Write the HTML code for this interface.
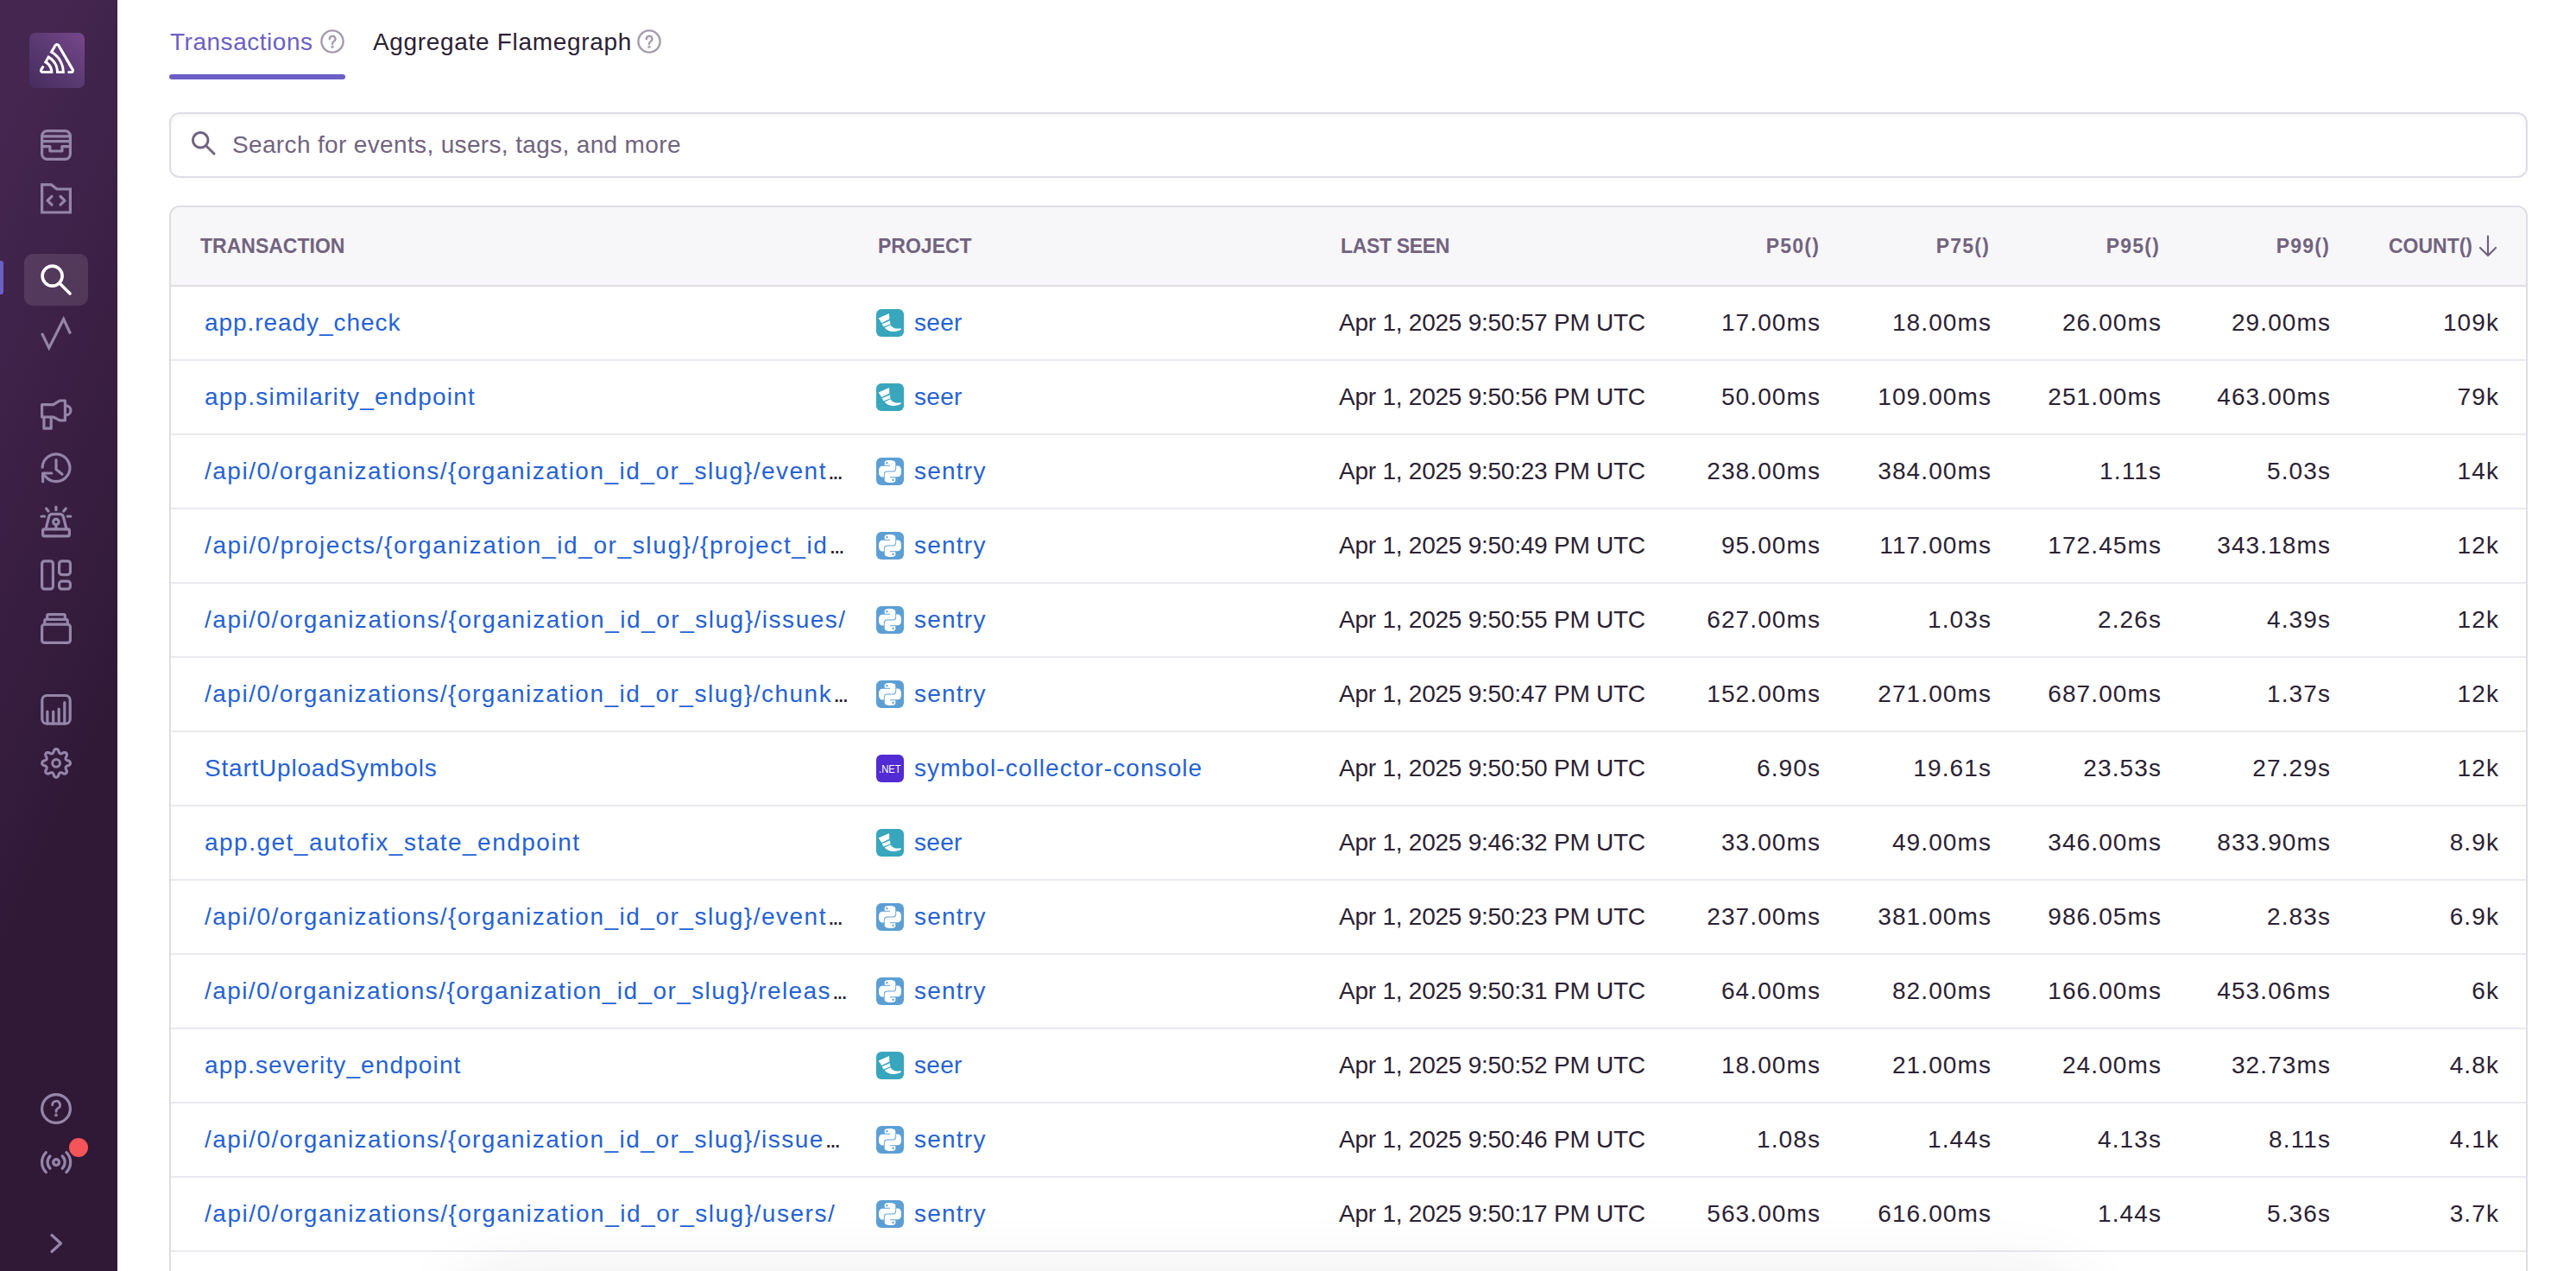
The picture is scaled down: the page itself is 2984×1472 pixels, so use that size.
<!DOCTYPE html>
<html><head><meta charset="utf-8"><style>
*{box-sizing:border-box;margin:0;padding:0}
html,body{width:2984px;height:1472px;overflow:hidden;background:#fff;font-family:"Liberation Sans",sans-serif;color:#2b2233}
#sb{position:absolute;left:0;top:0;width:136px;height:1472px;background:linear-gradient(294.17deg,#2f1937 35.57%,#452650 92.42%)}
#logo{position:absolute;left:34px;top:38px;width:64px;height:64px;border-radius:7px;background:linear-gradient(45deg,#452d5e 0%,#5b3a72 50%,#77478c 100%)}
#actbar{position:absolute;left:0;top:302px;width:4px;height:39px;border-radius:0 3px 3px 0;background:#6c5fc7}
#actbg{position:absolute;left:28px;top:294px;width:74px;height:60px;border-radius:10px;background:rgba(255,255,255,0.11)}
#sbicons{position:absolute;left:0;top:0}
#reddot{position:absolute;left:80px;top:1318px;width:22px;height:22px;border-radius:50%;background:#f55459;box-shadow:0 0 0 1.5px #2f1937}
.tab{position:absolute;top:0;height:60px;line-height:60px;font-size:28px;white-space:nowrap}
.hq{position:absolute;top:34px}
#ul{position:absolute;left:196px;top:86px;width:204px;height:6px;border-radius:3px;background:#6c5fc7}
#search{position:absolute;left:196px;top:130px;width:2732px;height:76px;border:2px solid #e0dce5;border-radius:12px;box-shadow:inset 0 2px 4px rgba(43,34,51,0.05)}
#search .ph{position:absolute;left:71px;top:0;line-height:72px;font-size:28px;color:#71637e;letter-spacing:0.35px}
#table{position:absolute;left:196px;top:238px;width:2732px;height:1400px;border:2px solid #e0dce5;border-radius:12px;overflow:hidden}
#thead{position:absolute;left:198px;top:240px;width:2728px;height:92px;background:#f7f6f9;border-bottom:2px solid #e0dce5;border-radius:10px 10px 0 0}
.th{position:absolute;top:240px;height:90px;line-height:90px;font-size:23px;font-weight:700;color:#71637e;white-space:nowrap;letter-spacing:0px}
.row{position:absolute;left:198px;width:2728px;height:86px;border-bottom:2px solid #ebe8ef}
.row>div{position:absolute;top:0;height:84px;line-height:84px;font-size:28px;white-space:nowrap}
.lk{color:#2562d4}
.ell{letter-spacing:-2.6px;margin-left:1px}
.c1{left:39px;width:760px;overflow:hidden;color:#2b2233}
.c2{left:817px}
.c2 .pi{position:absolute;left:0;top:26px}
.c2 .lk{position:absolute;left:44px}
.c3{left:1353px;letter-spacing:-0.24px}
.cn{text-align:right;letter-spacing:1.1px}
#shade{position:absolute;left:540px;top:1500px;width:1860px;height:100px;border-radius:60px;box-shadow:0 0 80px 22px rgba(43,34,51,0.09);pointer-events:none}
</style></head><body>

<div id="sb">
  <div id="logo"><svg width="40" height="35.2" viewBox="0 0 50 44" style="position:absolute;left:12px;top:12px"><path fill="#fff" d="M29,2.26a4.67,4.67,0,0,0-8,0L14.42,13.53A32.21,32.21,0,0,1,32.17,40.19H27.55A27.68,27.68,0,0,0,12.09,17.47L6,28a15.92,15.92,0,0,1,9.23,12.17H4.62A.76.76,0,0,1,4,39.06l2.94-5a10.740,10.740,0,0,0-3.36-1.9l-2.91,5a4.54,4.54,0,0,0,1.69,6.24A4.66,4.66,0,0,0,4.62,44H19.15a19.4,19.4,0,0,0-8-17.31l2.31-4A23.870,23.870,0,0,1,23.76,44H36.07a35.88,35.88,0,0,0-16.41-31.8l4.67-8a.77.77,0,0,1,1.05-.27c.53.29,20.290,34.770,20.660,35.170a.76.76,0,0,1-.68,1.13H40.6q.09,1.91,0,3.81h4.78A4.590,4.590,0,0,0,50,39.43a4.49,4.49,0,0,0-.62-2.28Z"/></svg></div>
  <div id="actbar"></div>
  <div id="actbg"></div>
  <svg id="sbicons" width="136" height="1472" viewBox="0 0 136 1472" fill="none" stroke="#9585a8" stroke-width="3.2" stroke-linecap="round" stroke-linejoin="round">
    <!-- inbox -->
    <rect x="48.6" y="151.6" width="32.8" height="32.8" rx="6"/>
    <path d="M49 157.8 H81 M49 163.7 H81 M49 169.6 H57.9 V175 H71.9 V169.6 H81" stroke-linecap="butt"/>
    <!-- folder code -->
    <path d="M48.6 213.9 H59.5 L65.8 219 H81.4 V246 H48.6 Z" stroke-linecap="butt" stroke-linejoin="miter"/>
    <path d="M60 227.5 L55 232.3 L60 237.2 M70 227.5 L75 232.3 L70 237.2"/>
    <!-- search active -->
    <g stroke="#fff" stroke-width="3.6"><circle cx="60.6" cy="319.6" r="11.5"/><path d="M69.5 328.5 L81 340"/></g>
    <!-- issues -->
    <path d="M48.5 386 L56.8 403 L73.7 369.5 L81.5 386.5" stroke-linecap="butt" stroke-linejoin="miter"/>
    <!-- megaphone -->
    <path d="M48.6 468.6 H61.8 L69.2 464 H75.4 V486.8 H69.2 L61.8 483 H48.6 Z"/>
    <path d="M76.4 469.8 A5.5 5.5 0 0 1 76.4 480.8"/>
    <path d="M50.9 483 V496.2 H59.2 V483"/>
    <!-- history clock -->
    <path d="M49.1 541.2 A15.9 15.9 0 1 1 52.8 552 L49.8 548.6"/>
    <path d="M59.8 548 H49.6 V557.8"/>
    <path d="M65 532.5 V543.5 L72 549.2"/>
    <!-- siren -->
    <rect x="49.6" y="612.8" width="30.8" height="8" rx="1.5"/>
    <path d="M53 612.8 L56.5 599 Q57.2 595.4 61 595.4 H69 Q72.8 595.4 73.5 599 L77 612.8"/>
    <circle cx="64.9" cy="604.4" r="3.2"/><path d="M64.9 607.6 V612.8"/>
    <path d="M64.9 587.2 V590.6 M53.6 589 L56 592 M76.2 589 L73.8 592 M48 598 H51.6 M78.2 598 H81.8"/>
    <!-- dashboards -->
    <rect x="48.6" y="649.8" width="12.8" height="32.4" rx="3"/>
    <rect x="68.6" y="649.8" width="12.8" height="15.8" rx="3"/>
    <rect x="68.6" y="673.2" width="12.8" height="9" rx="3"/>
    <!-- stack -->
    <rect x="48.6" y="723.2" width="32.8" height="21.2" rx="3"/>
    <path d="M51.8 723 V719 Q51.8 717.3 53.5 717.3 H76.5 Q78.2 717.3 78.2 719 V723"/>
    <path d="M54.7 717 V713.3 Q54.7 711.6 56.4 711.6 H73.6 Q75.3 711.6 75.3 713.3 V717"/>
    <!-- chart -->
    <rect x="48.8" y="805.5" width="32.4" height="32.7" rx="5.5"/>
    <path d="M54.9 824 V838 M61.7 824 V838 M68.2 821 V838 M74.8 813.7 V838" stroke-linecap="round"/>
    <!-- gear -->
    <path d="M81.50 883.80 L81.46 884.23 L81.34 884.65 L81.15 885.06 L80.87 885.46 L80.52 885.83 L80.08 886.17 L79.51 886.47 L78.55 886.66 L77.97 886.89 L77.51 887.12 L77.12 887.36 L76.80 887.60 L76.54 887.85 L76.33 888.11 L76.19 888.39 L76.09 888.69 L76.05 889.02 L76.06 889.39 L76.12 889.78 L76.22 890.22 L76.38 890.71 L76.63 891.29 L77.18 892.10 L77.37 892.71 L77.44 893.27 L77.43 893.78 L77.34 894.25 L77.19 894.68 L76.97 895.07 L76.70 895.40 L76.37 895.67 L75.98 895.89 L75.55 896.04 L75.08 896.13 L74.57 896.14 L74.01 896.07 L73.40 895.88 L72.59 895.33 L72.01 895.08 L71.52 894.92 L71.08 894.82 L70.69 894.76 L70.32 894.75 L69.99 894.79 L69.69 894.89 L69.41 895.03 L69.15 895.24 L68.90 895.50 L68.66 895.82 L68.42 896.21 L68.19 896.67 L67.96 897.25 L67.77 898.21 L67.47 898.78 L67.13 899.22 L66.76 899.57 L66.36 899.85 L65.95 900.04 L65.53 900.16 L65.10 900.20 L64.67 900.16 L64.25 900.04 L63.84 899.85 L63.44 899.57 L63.07 899.22 L62.73 898.78 L62.43 898.21 L62.24 897.25 L62.01 896.67 L61.78 896.21 L61.54 895.82 L61.30 895.50 L61.05 895.24 L60.79 895.03 L60.51 894.89 L60.21 894.79 L59.88 894.75 L59.51 894.76 L59.12 894.82 L58.68 894.92 L58.19 895.08 L57.61 895.33 L56.80 895.88 L56.19 896.07 L55.63 896.14 L55.12 896.13 L54.65 896.04 L54.22 895.89 L53.83 895.67 L53.50 895.40 L53.23 895.07 L53.01 894.68 L52.86 894.25 L52.77 893.78 L52.76 893.27 L52.83 892.71 L53.02 892.10 L53.57 891.29 L53.82 890.71 L53.98 890.22 L54.08 889.78 L54.14 889.39 L54.15 889.02 L54.11 888.69 L54.01 888.39 L53.87 888.11 L53.66 887.85 L53.40 887.60 L53.08 887.36 L52.69 887.12 L52.23 886.89 L51.65 886.66 L50.69 886.47 L50.12 886.17 L49.68 885.83 L49.33 885.46 L49.05 885.06 L48.86 884.65 L48.74 884.23 L48.70 883.80 L48.74 883.37 L48.86 882.95 L49.05 882.54 L49.33 882.14 L49.68 881.77 L50.12 881.43 L50.69 881.13 L51.65 880.94 L52.23 880.71 L52.69 880.48 L53.08 880.24 L53.40 880.00 L53.66 879.75 L53.87 879.49 L54.01 879.21 L54.11 878.91 L54.15 878.58 L54.14 878.21 L54.08 877.82 L53.98 877.38 L53.82 876.89 L53.57 876.31 L53.02 875.50 L52.83 874.89 L52.76 874.33 L52.77 873.82 L52.86 873.35 L53.01 872.92 L53.23 872.53 L53.50 872.20 L53.83 871.93 L54.22 871.71 L54.65 871.56 L55.12 871.47 L55.63 871.46 L56.19 871.53 L56.80 871.72 L57.61 872.27 L58.19 872.52 L58.68 872.68 L59.12 872.78 L59.51 872.84 L59.88 872.85 L60.21 872.81 L60.51 872.71 L60.79 872.57 L61.05 872.36 L61.30 872.10 L61.54 871.78 L61.78 871.39 L62.01 870.93 L62.24 870.35 L62.43 869.39 L62.73 868.82 L63.07 868.38 L63.44 868.03 L63.84 867.75 L64.25 867.56 L64.67 867.44 L65.10 867.40 L65.53 867.44 L65.95 867.56 L66.36 867.75 L66.76 868.03 L67.13 868.38 L67.47 868.82 L67.77 869.39 L67.96 870.35 L68.19 870.93 L68.42 871.39 L68.66 871.78 L68.90 872.10 L69.15 872.36 L69.41 872.57 L69.69 872.71 L69.99 872.81 L70.32 872.85 L70.69 872.84 L71.08 872.78 L71.52 872.68 L72.01 872.52 L72.59 872.27 L73.40 871.72 L74.01 871.53 L74.57 871.46 L75.08 871.47 L75.55 871.56 L75.98 871.71 L76.37 871.93 L76.70 872.20 L76.97 872.53 L77.19 872.92 L77.34 873.35 L77.43 873.82 L77.44 874.33 L77.37 874.89 L77.18 875.50 L76.63 876.31 L76.38 876.89 L76.22 877.38 L76.12 877.82 L76.06 878.21 L76.05 878.58 L76.09 878.91 L76.19 879.21 L76.33 879.49 L76.54 879.75 L76.80 880.00 L77.12 880.24 L77.51 880.48 L77.97 880.71 L78.55 880.94 L79.51 881.13 L80.08 881.43 L80.52 881.77 L80.87 882.14 L81.15 882.54 L81.34 882.95 L81.46 883.37 L81.50 883.80Z" stroke-width="3.1"/>
    <circle cx="65.1" cy="883.8" r="4.4" stroke-width="3"/>
    <!-- help -->
    <circle cx="65" cy="1284" r="16.4"/>
    <path d="M60.7 1279.8 A4.4 4.4 0 1 1 67 1283.6 Q65 1284.8 65 1287.4" stroke-width="2.8"/>
    <circle cx="65" cy="1291.4" r="0.6" fill="#9585a8" stroke-width="2.6"/>
    <!-- broadcast -->
    <circle cx="65.1" cy="1346.1" r="3.4"/>
    <path d="M58 1339 A10 10 0 0 0 58 1353.2 M72.2 1339 A10 10 0 0 1 72.2 1353.2"/>
    <path d="M53.3 1334.6 A16.3 16.3 0 0 0 53.3 1357.6 M76.9 1334.6 A16.3 16.3 0 0 1 76.9 1357.6"/>
    <!-- chevron -->
    <path d="M60 1430.5 L70.5 1440 L60 1449.5"/>
  </svg>
  <div id="reddot"></div>
</div>
<div class="tab" style="left:197px;top:19px;color:#6c5fc7;letter-spacing:0.52px">Transactions</div>
<svg class="hq" style="left:371px" width="28" height="28" viewBox="0 0 28 28" fill="none" stroke="#a59cae" stroke-width="2.4" stroke-linecap="round"><circle cx="14" cy="14" r="12.6"/><path d="M10.8 11.2 A3.3 3.3 0 1 1 15.6 14 Q14 15 14 16.8"/><circle cx="14" cy="20.2" r="0.6" fill="#a59cae"/></svg>
<div class="tab" style="left:432px;top:19px;letter-spacing:0.68px">Aggregate Flamegraph</div>
<svg class="hq" style="left:738px" width="28" height="28" viewBox="0 0 28 28" fill="none" stroke="#a59cae" stroke-width="2.4" stroke-linecap="round"><circle cx="14" cy="14" r="12.6"/><path d="M10.8 11.2 A3.3 3.3 0 1 1 15.6 14 Q14 15 14 16.8"/><circle cx="14" cy="20.2" r="0.6" fill="#a59cae"/></svg>
<div id="ul"></div>
<div id="search"><svg style="position:absolute;left:23px;top:19px" width="32" height="32" viewBox="0 0 32 32" fill="none" stroke="#71637e" stroke-width="3" stroke-linecap="round"><circle cx="11.2" cy="11.3" r="8.8"/><path d="M17.6 17.7 L27 27"/></svg><span class="ph">Search for events, users, tags, and more</span></div>
<div id="table"></div>
<div id="thead"></div>
<div class="th" style="left:232px">TRANSACTION</div>
<div class="th" style="left:1017px">PROJECT</div>
<div class="th" style="left:1553px;letter-spacing:-0.35px">LAST SEEN</div>
<div class="th" style="right:876px;letter-spacing:1.2px">P50()</div>
<div class="th" style="right:679px;letter-spacing:1.2px">P75()</div>
<div class="th" style="right:482px;letter-spacing:1.2px">P95()</div>
<div class="th" style="right:285px;letter-spacing:1.2px">P99()</div>
<div class="th" style="right:91px">COUNT()<svg style="margin-left:7px;vertical-align:-5px" width="22" height="26" viewBox="0 0 22 26" fill="none" stroke="#71637e" stroke-width="2.2" stroke-linecap="round" stroke-linejoin="round"><path d="M11 1.5 V24 M2 15 L11 24 L20 15"/></svg></div>
<div class="row" style="top:332px"><div class="c1" style="letter-spacing:0.94px"><span class="lk">app.ready_check</span></div><div class="c2"><svg class="pi" width="32" height="32" viewBox="0 0 32 32"><rect width="32" height="32" rx="6" fill="#38a6bd"/><path d="M2.6 10.4 L15 5.1 L15.4 11.6 L6.3 15.9 Z M6.7 17.3 L16 13.2 L16.4 17.3 L8.5 20.5 Z M9.7 21.4 L16.75 18.3 C17.8 20.5 19.5 21.6 21.5 22.2 C24 22.9 26.5 22.6 28.9 22.2 L28.6 23.8 C26 25.2 22.6 26.3 19.5 26 C15.6 25.7 12 24.3 9.7 21.4 Z" fill="#fff"/></svg><span class="lk" style="letter-spacing:0.3px">seer</span></div><div class="c3">Apr 1, 2025 9:50:57 PM UTC</div><div class="cn" style="right:817px">17.00ms</div><div class="cn" style="right:619px">18.00ms</div><div class="cn" style="right:422px">26.00ms</div><div class="cn" style="right:226px">29.00ms</div><div class="cn" style="right:31px">109k</div></div><div class="row" style="top:418px"><div class="c1" style="letter-spacing:1.2px"><span class="lk">app.similarity_endpoint</span></div><div class="c2"><svg class="pi" width="32" height="32" viewBox="0 0 32 32"><rect width="32" height="32" rx="6" fill="#38a6bd"/><path d="M2.6 10.4 L15 5.1 L15.4 11.6 L6.3 15.9 Z M6.7 17.3 L16 13.2 L16.4 17.3 L8.5 20.5 Z M9.7 21.4 L16.75 18.3 C17.8 20.5 19.5 21.6 21.5 22.2 C24 22.9 26.5 22.6 28.9 22.2 L28.6 23.8 C26 25.2 22.6 26.3 19.5 26 C15.6 25.7 12 24.3 9.7 21.4 Z" fill="#fff"/></svg><span class="lk" style="letter-spacing:0.3px">seer</span></div><div class="c3">Apr 1, 2025 9:50:56 PM UTC</div><div class="cn" style="right:817px">50.00ms</div><div class="cn" style="right:619px">109.00ms</div><div class="cn" style="right:422px">251.00ms</div><div class="cn" style="right:226px">463.00ms</div><div class="cn" style="right:31px">79k</div></div><div class="row" style="top:504px"><div class="c1" style="letter-spacing:1.5px"><span class="lk">/api/0/organizations/{organization_id_or_slug}/event</span><span class="ell">...</span></div><div class="c2"><svg class="pi" width="32" height="32" viewBox="0 0 32 32"><rect width="32" height="32" rx="6" fill="#5c9fd5"/><g transform="translate(3,3) scale(1.0833)" fill="#fff"><path d="M14.25.18l.9.2.73.26.59.3.45.32.34.34.25.34.16.33.1.3.04.26.02.2-.01.13V8.5l-.05.63-.13.55-.21.46-.26.38-.3.31-.33.25-.35.19-.35.14-.33.1-.3.07-.26.04-.21.02H8.77l-.69.05-.59.14-.5.22-.41.27-.33.32-.27.35-.2.36-.15.37-.1.35-.07.32-.04.27-.02.21v3.06H3.17l-.21-.03-.28-.07-.32-.12-.35-.18-.36-.26-.36-.36-.35-.46-.32-.59-.28-.73-.21-.88-.14-1.05-.05-1.23.06-1.22.16-1.04.24-.87.32-.71.36-.57.4-.44.42-.33.42-.24.4-.16.36-.1.32-.05.24-.01h.16l.06.01h8.16v-.83H6.18l-.01-2.75-.02-.37.05-.34.11-.31.17-.28.25-.26.31-.23.38-.2.44-.18.51-.15.58-.12.64-.1.71-.06.77-.04.84-.02 1.27.05zm-6.3 1.98l-.23.33-.08.41.08.41.23.34.33.22.41.09.41-.09.33-.22.23-.34.08-.41-.08-.41-.23-.33-.33-.22-.41-.09-.41.09zm13.09 3.95l.28.06.32.12.35.18.36.27.36.35.35.47.32.59.28.73.21.88.14 1.04.05 1.23-.06 1.23-.16 1.04-.24.86-.32.71-.36.57-.4.45-.42.33-.42.24-.4.16-.36.09-.32.05-.24.02-.16-.01h-8.22v.82h5.84l.01 2.76.02.36-.05.34-.11.31-.17.29-.25.25-.31.24-.38.2-.44.17-.51.15-.58.13-.64.09-.71.07-.77.04-.84.01-1.27-.04-1.07-.14-.9-.2-.73-.25-.59-.3-.45-.33-.34-.34-.25-.34-.16-.33-.1-.3-.04-.25-.02-.2.01-.13v-5.34l.05-.64.13-.54.21-.46.26-.38.3-.32.33-.24.35-.2.35-.14.33-.1.3-.06.26-.04.21-.02.13-.01h5.84l.69-.05.59-.14.5-.21.41-.28.33-.32.27-.35.2-.36.15-.36.1-.35.07-.32.04-.28.02-.21V6.07h2.09l.14.01zm-6.47 14.25l-.23.33-.08.41.08.41.23.33.33.23.41.08.41-.08.33-.23.23-.33.08-.41-.08-.41-.23-.33-.33-.23-.41-.08-.41.08z"/></g></svg><span class="lk" style="letter-spacing:1.23px">sentry</span></div><div class="c3">Apr 1, 2025 9:50:23 PM UTC</div><div class="cn" style="right:817px">238.00ms</div><div class="cn" style="right:619px">384.00ms</div><div class="cn" style="right:422px">1.11s</div><div class="cn" style="right:226px">5.03s</div><div class="cn" style="right:31px">14k</div></div><div class="row" style="top:590px"><div class="c1" style="letter-spacing:1.62px"><span class="lk">/api/0/projects/{organization_id_or_slug}/{project_id</span><span class="ell">...</span></div><div class="c2"><svg class="pi" width="32" height="32" viewBox="0 0 32 32"><rect width="32" height="32" rx="6" fill="#5c9fd5"/><g transform="translate(3,3) scale(1.0833)" fill="#fff"><path d="M14.25.18l.9.2.73.26.59.3.45.32.34.34.25.34.16.33.1.3.04.26.02.2-.01.13V8.5l-.05.63-.13.55-.21.46-.26.38-.3.31-.33.25-.35.19-.35.14-.33.1-.3.07-.26.04-.21.02H8.77l-.69.05-.59.14-.5.22-.41.27-.33.32-.27.35-.2.36-.15.37-.1.35-.07.32-.04.27-.02.21v3.06H3.17l-.21-.03-.28-.07-.32-.12-.35-.18-.36-.26-.36-.36-.35-.46-.32-.59-.28-.73-.21-.88-.14-1.05-.05-1.23.06-1.22.16-1.04.24-.87.32-.71.36-.57.4-.44.42-.33.42-.24.4-.16.36-.1.32-.05.24-.01h.16l.06.01h8.16v-.83H6.18l-.01-2.75-.02-.37.05-.34.11-.31.17-.28.25-.26.31-.23.38-.2.44-.18.51-.15.58-.12.64-.1.71-.06.77-.04.84-.02 1.27.05zm-6.3 1.98l-.23.33-.08.41.08.41.23.34.33.22.41.09.41-.09.33-.22.23-.34.08-.41-.08-.41-.23-.33-.33-.22-.41-.09-.41.09zm13.09 3.95l.28.06.32.12.35.18.36.27.36.35.35.47.32.59.28.73.21.88.14 1.04.05 1.23-.06 1.23-.16 1.04-.24.86-.32.71-.36.57-.4.45-.42.33-.42.24-.4.16-.36.09-.32.05-.24.02-.16-.01h-8.22v.82h5.84l.01 2.76.02.36-.05.34-.11.31-.17.29-.25.25-.31.24-.38.2-.44.17-.51.15-.58.13-.64.09-.71.07-.77.04-.84.01-1.27-.04-1.07-.14-.9-.2-.73-.25-.59-.3-.45-.33-.34-.34-.25-.34-.16-.33-.1-.3-.04-.25-.02-.2.01-.13v-5.34l.05-.64.13-.54.21-.46.26-.38.3-.32.33-.24.35-.2.35-.14.33-.1.3-.06.26-.04.21-.02.13-.01h5.84l.69-.05.59-.14.5-.21.41-.28.33-.32.27-.35.2-.36.15-.36.1-.35.07-.32.04-.28.02-.21V6.07h2.09l.14.01zm-6.47 14.25l-.23.33-.08.41.08.41.23.33.33.23.41.08.41-.08.33-.23.23-.33.08-.41-.08-.41-.23-.33-.33-.23-.41-.08-.41.08z"/></g></svg><span class="lk" style="letter-spacing:1.23px">sentry</span></div><div class="c3">Apr 1, 2025 9:50:49 PM UTC</div><div class="cn" style="right:817px">95.00ms</div><div class="cn" style="right:619px">117.00ms</div><div class="cn" style="right:422px">172.45ms</div><div class="cn" style="right:226px">343.18ms</div><div class="cn" style="right:31px">12k</div></div><div class="row" style="top:676px"><div class="c1" style="letter-spacing:1.52px"><span class="lk">/api/0/organizations/{organization_id_or_slug}/issues/</span></div><div class="c2"><svg class="pi" width="32" height="32" viewBox="0 0 32 32"><rect width="32" height="32" rx="6" fill="#5c9fd5"/><g transform="translate(3,3) scale(1.0833)" fill="#fff"><path d="M14.25.18l.9.2.73.26.59.3.45.32.34.34.25.34.16.33.1.3.04.26.02.2-.01.13V8.5l-.05.63-.13.55-.21.46-.26.38-.3.31-.33.25-.35.19-.35.14-.33.1-.3.07-.26.04-.21.02H8.77l-.69.05-.59.14-.5.22-.41.27-.33.32-.27.35-.2.36-.15.37-.1.35-.07.32-.04.27-.02.21v3.06H3.17l-.21-.03-.28-.07-.32-.12-.35-.18-.36-.26-.36-.36-.35-.46-.32-.59-.28-.73-.21-.88-.14-1.05-.05-1.23.06-1.22.16-1.04.24-.87.32-.71.36-.57.4-.44.42-.33.42-.24.4-.16.36-.1.32-.05.24-.01h.16l.06.01h8.16v-.83H6.18l-.01-2.75-.02-.37.05-.34.11-.31.17-.28.25-.26.31-.23.38-.2.44-.18.51-.15.58-.12.64-.1.71-.06.77-.04.84-.02 1.27.05zm-6.3 1.98l-.23.33-.08.41.08.41.23.34.33.22.41.09.41-.09.33-.22.23-.34.08-.41-.08-.41-.23-.33-.33-.22-.41-.09-.41.09zm13.09 3.95l.28.06.32.12.35.18.36.27.36.35.35.47.32.59.28.73.21.88.14 1.04.05 1.23-.06 1.23-.16 1.04-.24.86-.32.71-.36.57-.4.45-.42.33-.42.24-.4.16-.36.09-.32.05-.24.02-.16-.01h-8.22v.82h5.84l.01 2.76.02.36-.05.34-.11.31-.17.29-.25.25-.31.24-.38.2-.44.17-.51.15-.58.13-.64.09-.71.07-.77.04-.84.01-1.27-.04-1.07-.14-.9-.2-.73-.25-.59-.3-.45-.33-.34-.34-.25-.34-.16-.33-.1-.3-.04-.25-.02-.2.01-.13v-5.34l.05-.64.13-.54.21-.46.26-.38.3-.32.33-.24.35-.2.35-.14.33-.1.3-.06.26-.04.21-.02.13-.01h5.84l.69-.05.59-.14.5-.21.41-.28.33-.32.27-.35.2-.36.15-.36.1-.35.07-.32.04-.28.02-.21V6.07h2.09l.14.01zm-6.47 14.25l-.23.33-.08.41.08.41.23.33.33.23.41.08.41-.08.33-.23.23-.33.08-.41-.08-.41-.23-.33-.33-.23-.41-.08-.41.08z"/></g></svg><span class="lk" style="letter-spacing:1.23px">sentry</span></div><div class="c3">Apr 1, 2025 9:50:55 PM UTC</div><div class="cn" style="right:817px">627.00ms</div><div class="cn" style="right:619px">1.03s</div><div class="cn" style="right:422px">2.26s</div><div class="cn" style="right:226px">4.39s</div><div class="cn" style="right:31px">12k</div></div><div class="row" style="top:762px"><div class="c1" style="letter-spacing:1.5px"><span class="lk">/api/0/organizations/{organization_id_or_slug}/chunk</span><span class="ell">...</span></div><div class="c2"><svg class="pi" width="32" height="32" viewBox="0 0 32 32"><rect width="32" height="32" rx="6" fill="#5c9fd5"/><g transform="translate(3,3) scale(1.0833)" fill="#fff"><path d="M14.25.18l.9.2.73.26.59.3.45.32.34.34.25.34.16.33.1.3.04.26.02.2-.01.13V8.5l-.05.63-.13.55-.21.46-.26.38-.3.31-.33.25-.35.19-.35.14-.33.1-.3.07-.26.04-.21.02H8.77l-.69.05-.59.14-.5.22-.41.27-.33.32-.27.35-.2.36-.15.37-.1.35-.07.32-.04.27-.02.21v3.06H3.17l-.21-.03-.28-.07-.32-.12-.35-.18-.36-.26-.36-.36-.35-.46-.32-.59-.28-.73-.21-.88-.14-1.05-.05-1.23.06-1.22.16-1.04.24-.87.32-.71.36-.57.4-.44.42-.33.42-.24.4-.16.36-.1.32-.05.24-.01h.16l.06.01h8.16v-.83H6.18l-.01-2.75-.02-.37.05-.34.11-.31.17-.28.25-.26.31-.23.38-.2.44-.18.51-.15.58-.12.64-.1.71-.06.77-.04.84-.02 1.27.05zm-6.3 1.98l-.23.33-.08.41.08.41.23.34.33.22.41.09.41-.09.33-.22.23-.34.08-.41-.08-.41-.23-.33-.33-.22-.41-.09-.41.09zm13.09 3.95l.28.06.32.12.35.18.36.27.36.35.35.47.32.59.28.73.21.88.14 1.04.05 1.23-.06 1.23-.16 1.04-.24.86-.32.71-.36.57-.4.45-.42.33-.42.24-.4.16-.36.09-.32.05-.24.02-.16-.01h-8.22v.82h5.84l.01 2.76.02.36-.05.34-.11.31-.17.29-.25.25-.31.24-.38.2-.44.17-.51.15-.58.13-.64.09-.71.07-.77.04-.84.01-1.27-.04-1.07-.14-.9-.2-.73-.25-.59-.3-.45-.33-.34-.34-.25-.34-.16-.33-.1-.3-.04-.25-.02-.2.01-.13v-5.34l.05-.64.13-.54.21-.46.26-.38.3-.32.33-.24.35-.2.35-.14.33-.1.3-.06.26-.04.21-.02.13-.01h5.84l.69-.05.59-.14.5-.21.41-.28.33-.32.27-.35.2-.36.15-.36.1-.35.07-.32.04-.28.02-.21V6.07h2.09l.14.01zm-6.47 14.25l-.23.33-.08.41.08.41.23.33.33.23.41.08.41-.08.33-.23.23-.33.08-.41-.08-.41-.23-.33-.33-.23-.41-.08-.41.08z"/></g></svg><span class="lk" style="letter-spacing:1.23px">sentry</span></div><div class="c3">Apr 1, 2025 9:50:47 PM UTC</div><div class="cn" style="right:817px">152.00ms</div><div class="cn" style="right:619px">271.00ms</div><div class="cn" style="right:422px">687.00ms</div><div class="cn" style="right:226px">1.37s</div><div class="cn" style="right:31px">12k</div></div><div class="row" style="top:848px"><div class="c1" style="letter-spacing:0.79px"><span class="lk">StartUploadSymbols</span></div><div class="c2"><svg class="pi" width="32" height="32" viewBox="0 0 32 32"><rect width="32" height="32" rx="6" fill="#512bd4"/><text x="3" y="21.2" font-family="Liberation Sans" font-size="13.5" fill="#fff" textLength="25.7" lengthAdjust="spacingAndGlyphs">.NET</text></svg><span class="lk" style="letter-spacing:1.09px">symbol-collector-console</span></div><div class="c3">Apr 1, 2025 9:50:50 PM UTC</div><div class="cn" style="right:817px">6.90s</div><div class="cn" style="right:619px">19.61s</div><div class="cn" style="right:422px">23.53s</div><div class="cn" style="right:226px">27.29s</div><div class="cn" style="right:31px">12k</div></div><div class="row" style="top:934px"><div class="c1" style="letter-spacing:1.49px"><span class="lk">app.get_autofix_state_endpoint</span></div><div class="c2"><svg class="pi" width="32" height="32" viewBox="0 0 32 32"><rect width="32" height="32" rx="6" fill="#38a6bd"/><path d="M2.6 10.4 L15 5.1 L15.4 11.6 L6.3 15.9 Z M6.7 17.3 L16 13.2 L16.4 17.3 L8.5 20.5 Z M9.7 21.4 L16.75 18.3 C17.8 20.5 19.5 21.6 21.5 22.2 C24 22.9 26.5 22.6 28.9 22.2 L28.6 23.8 C26 25.2 22.6 26.3 19.5 26 C15.6 25.7 12 24.3 9.7 21.4 Z" fill="#fff"/></svg><span class="lk" style="letter-spacing:0.3px">seer</span></div><div class="c3">Apr 1, 2025 9:46:32 PM UTC</div><div class="cn" style="right:817px">33.00ms</div><div class="cn" style="right:619px">49.00ms</div><div class="cn" style="right:422px">346.00ms</div><div class="cn" style="right:226px">833.90ms</div><div class="cn" style="right:31px">8.9k</div></div><div class="row" style="top:1020px"><div class="c1" style="letter-spacing:1.5px"><span class="lk">/api/0/organizations/{organization_id_or_slug}/event</span><span class="ell">...</span></div><div class="c2"><svg class="pi" width="32" height="32" viewBox="0 0 32 32"><rect width="32" height="32" rx="6" fill="#5c9fd5"/><g transform="translate(3,3) scale(1.0833)" fill="#fff"><path d="M14.25.18l.9.2.73.26.59.3.45.32.34.34.25.34.16.33.1.3.04.26.02.2-.01.13V8.5l-.05.63-.13.55-.21.46-.26.38-.3.31-.33.25-.35.19-.35.14-.33.1-.3.07-.26.04-.21.02H8.77l-.69.05-.59.14-.5.22-.41.27-.33.32-.27.35-.2.36-.15.37-.1.35-.07.32-.04.27-.02.21v3.06H3.17l-.21-.03-.28-.07-.32-.12-.35-.18-.36-.26-.36-.36-.35-.46-.32-.59-.28-.73-.21-.88-.14-1.05-.05-1.23.06-1.22.16-1.04.24-.87.32-.71.36-.57.4-.44.42-.33.42-.24.4-.16.36-.1.32-.05.24-.01h.16l.06.01h8.16v-.83H6.18l-.01-2.75-.02-.37.05-.34.11-.31.17-.28.25-.26.31-.23.38-.2.44-.18.51-.15.58-.12.64-.1.71-.06.77-.04.84-.02 1.27.05zm-6.3 1.98l-.23.33-.08.41.08.41.23.34.33.22.41.09.41-.09.33-.22.23-.34.08-.41-.08-.41-.23-.33-.33-.22-.41-.09-.41.09zm13.09 3.95l.28.06.32.12.35.18.36.27.36.35.35.47.32.59.28.73.21.88.14 1.04.05 1.23-.06 1.23-.16 1.04-.24.86-.32.71-.36.57-.4.45-.42.33-.42.24-.4.16-.36.09-.32.05-.24.02-.16-.01h-8.22v.82h5.84l.01 2.76.02.36-.05.34-.11.31-.17.29-.25.25-.31.24-.38.2-.44.17-.51.15-.58.13-.64.09-.71.07-.77.04-.84.01-1.27-.04-1.07-.14-.9-.2-.73-.25-.59-.3-.45-.33-.34-.34-.25-.34-.16-.33-.1-.3-.04-.25-.02-.2.01-.13v-5.34l.05-.64.13-.54.21-.46.26-.38.3-.32.33-.24.35-.2.35-.14.33-.1.3-.06.26-.04.21-.02.13-.01h5.84l.69-.05.59-.14.5-.21.41-.28.33-.32.27-.35.2-.36.15-.36.1-.35.07-.32.04-.28.02-.21V6.07h2.09l.14.01zm-6.47 14.25l-.23.33-.08.41.08.41.23.33.33.23.41.08.41-.08.33-.23.23-.33.08-.41-.08-.41-.23-.33-.33-.23-.41-.08-.41.08z"/></g></svg><span class="lk" style="letter-spacing:1.23px">sentry</span></div><div class="c3">Apr 1, 2025 9:50:23 PM UTC</div><div class="cn" style="right:817px">237.00ms</div><div class="cn" style="right:619px">381.00ms</div><div class="cn" style="right:422px">986.05ms</div><div class="cn" style="right:226px">2.83s</div><div class="cn" style="right:31px">6.9k</div></div><div class="row" style="top:1106px"><div class="c1" style="letter-spacing:1.42px"><span class="lk">/api/0/organizations/{organization_id_or_slug}/releas</span><span class="ell">...</span></div><div class="c2"><svg class="pi" width="32" height="32" viewBox="0 0 32 32"><rect width="32" height="32" rx="6" fill="#5c9fd5"/><g transform="translate(3,3) scale(1.0833)" fill="#fff"><path d="M14.25.18l.9.2.73.26.59.3.45.32.34.34.25.34.16.33.1.3.04.26.02.2-.01.13V8.5l-.05.63-.13.55-.21.46-.26.38-.3.31-.33.25-.35.19-.35.14-.33.1-.3.07-.26.04-.21.02H8.77l-.69.05-.59.14-.5.22-.41.27-.33.32-.27.35-.2.36-.15.37-.1.35-.07.32-.04.27-.02.21v3.06H3.17l-.21-.03-.28-.07-.32-.12-.35-.18-.36-.26-.36-.36-.35-.46-.32-.59-.28-.73-.21-.88-.14-1.05-.05-1.23.06-1.22.16-1.04.24-.87.32-.71.36-.57.4-.44.42-.33.42-.24.4-.16.36-.1.32-.05.24-.01h.16l.06.01h8.16v-.83H6.18l-.01-2.75-.02-.37.05-.34.11-.31.17-.28.25-.26.31-.23.38-.2.44-.18.51-.15.58-.12.64-.1.71-.06.77-.04.84-.02 1.27.05zm-6.3 1.98l-.23.33-.08.41.08.41.23.34.33.22.41.09.41-.09.33-.22.23-.34.08-.41-.08-.41-.23-.33-.33-.22-.41-.09-.41.09zm13.09 3.95l.28.06.32.12.35.18.36.27.36.35.35.47.32.59.28.73.21.88.14 1.04.05 1.23-.06 1.23-.16 1.04-.24.86-.32.71-.36.57-.4.45-.42.33-.42.24-.4.16-.36.09-.32.05-.24.02-.16-.01h-8.22v.82h5.84l.01 2.76.02.36-.05.34-.11.31-.17.29-.25.25-.31.24-.38.2-.44.17-.51.15-.58.13-.64.09-.71.07-.77.04-.84.01-1.27-.04-1.07-.14-.9-.2-.73-.25-.59-.3-.45-.33-.34-.34-.25-.34-.16-.33-.1-.3-.04-.25-.02-.2.01-.13v-5.34l.05-.64.13-.54.21-.46.26-.38.3-.32.33-.24.35-.2.35-.14.33-.1.3-.06.26-.04.21-.02.13-.01h5.84l.69-.05.59-.14.5-.21.41-.28.33-.32.27-.35.2-.36.15-.36.1-.35.07-.32.04-.28.02-.21V6.07h2.09l.14.01zm-6.47 14.25l-.23.33-.08.41.08.41.23.33.33.23.41.08.41-.08.33-.23.23-.33.08-.41-.08-.41-.23-.33-.33-.23-.41-.08-.41.08z"/></g></svg><span class="lk" style="letter-spacing:1.23px">sentry</span></div><div class="c3">Apr 1, 2025 9:50:31 PM UTC</div><div class="cn" style="right:817px">64.00ms</div><div class="cn" style="right:619px">82.00ms</div><div class="cn" style="right:422px">166.00ms</div><div class="cn" style="right:226px">453.06ms</div><div class="cn" style="right:31px">6k</div></div><div class="row" style="top:1192px"><div class="c1" style="letter-spacing:1.12px"><span class="lk">app.severity_endpoint</span></div><div class="c2"><svg class="pi" width="32" height="32" viewBox="0 0 32 32"><rect width="32" height="32" rx="6" fill="#38a6bd"/><path d="M2.6 10.4 L15 5.1 L15.4 11.6 L6.3 15.9 Z M6.7 17.3 L16 13.2 L16.4 17.3 L8.5 20.5 Z M9.7 21.4 L16.75 18.3 C17.8 20.5 19.5 21.6 21.5 22.2 C24 22.9 26.5 22.6 28.9 22.2 L28.6 23.8 C26 25.2 22.6 26.3 19.5 26 C15.6 25.7 12 24.3 9.7 21.4 Z" fill="#fff"/></svg><span class="lk" style="letter-spacing:0.3px">seer</span></div><div class="c3">Apr 1, 2025 9:50:52 PM UTC</div><div class="cn" style="right:817px">18.00ms</div><div class="cn" style="right:619px">21.00ms</div><div class="cn" style="right:422px">24.00ms</div><div class="cn" style="right:226px">32.73ms</div><div class="cn" style="right:31px">4.8k</div></div><div class="row" style="top:1278px"><div class="c1" style="letter-spacing:1.5px"><span class="lk">/api/0/organizations/{organization_id_or_slug}/issue</span><span class="ell">...</span></div><div class="c2"><svg class="pi" width="32" height="32" viewBox="0 0 32 32"><rect width="32" height="32" rx="6" fill="#5c9fd5"/><g transform="translate(3,3) scale(1.0833)" fill="#fff"><path d="M14.25.18l.9.2.73.26.59.3.45.32.34.34.25.34.16.33.1.3.04.26.02.2-.01.13V8.5l-.05.63-.13.55-.21.46-.26.38-.3.31-.33.25-.35.19-.35.14-.33.1-.3.07-.26.04-.21.02H8.77l-.69.05-.59.14-.5.22-.41.27-.33.32-.27.35-.2.36-.15.37-.1.35-.07.32-.04.27-.02.21v3.06H3.17l-.21-.03-.28-.07-.32-.12-.35-.18-.36-.26-.36-.36-.35-.46-.32-.59-.28-.73-.21-.88-.14-1.05-.05-1.23.06-1.22.16-1.04.24-.87.32-.71.36-.57.4-.44.42-.33.42-.24.4-.16.36-.1.32-.05.24-.01h.16l.06.01h8.16v-.83H6.18l-.01-2.75-.02-.37.05-.34.11-.31.17-.28.25-.26.31-.23.38-.2.44-.18.51-.15.58-.12.64-.1.71-.06.77-.04.84-.02 1.27.05zm-6.3 1.98l-.23.33-.08.41.08.41.23.34.33.22.41.09.41-.09.33-.22.23-.34.08-.41-.08-.41-.23-.33-.33-.22-.41-.09-.41.09zm13.09 3.95l.28.06.32.12.35.18.36.27.36.35.35.47.32.59.28.73.21.88.14 1.04.05 1.23-.06 1.23-.16 1.04-.24.86-.32.71-.36.57-.4.45-.42.33-.42.24-.4.16-.36.09-.32.05-.24.02-.16-.01h-8.22v.82h5.84l.01 2.76.02.36-.05.34-.11.31-.17.29-.25.25-.31.24-.38.2-.44.17-.51.15-.58.13-.64.09-.71.07-.77.04-.84.01-1.27-.04-1.07-.14-.9-.2-.73-.25-.59-.3-.45-.33-.34-.34-.25-.34-.16-.33-.1-.3-.04-.25-.02-.2.01-.13v-5.34l.05-.64.13-.54.21-.46.26-.38.3-.32.33-.24.35-.2.35-.14.33-.1.3-.06.26-.04.21-.02.13-.01h5.84l.69-.05.59-.14.5-.21.41-.28.33-.32.27-.35.2-.36.15-.36.1-.35.07-.32.04-.28.02-.21V6.07h2.09l.14.01zm-6.47 14.25l-.23.33-.08.41.08.41.23.33.33.23.41.08.41-.08.33-.23.23-.33.08-.41-.08-.41-.23-.33-.33-.23-.41-.08-.41.08z"/></g></svg><span class="lk" style="letter-spacing:1.23px">sentry</span></div><div class="c3">Apr 1, 2025 9:50:46 PM UTC</div><div class="cn" style="right:817px">1.08s</div><div class="cn" style="right:619px">1.44s</div><div class="cn" style="right:422px">4.13s</div><div class="cn" style="right:226px">8.11s</div><div class="cn" style="right:31px">4.1k</div></div><div class="row" style="top:1364px"><div class="c1" style="letter-spacing:1.52px"><span class="lk">/api/0/organizations/{organization_id_or_slug}/users/</span></div><div class="c2"><svg class="pi" width="32" height="32" viewBox="0 0 32 32"><rect width="32" height="32" rx="6" fill="#5c9fd5"/><g transform="translate(3,3) scale(1.0833)" fill="#fff"><path d="M14.25.18l.9.2.73.26.59.3.45.32.34.34.25.34.16.33.1.3.04.26.02.2-.01.13V8.5l-.05.63-.13.55-.21.46-.26.38-.3.31-.33.25-.35.19-.35.14-.33.1-.3.07-.26.04-.21.02H8.77l-.69.05-.59.14-.5.22-.41.27-.33.32-.27.35-.2.36-.15.37-.1.35-.07.32-.04.27-.02.21v3.06H3.17l-.21-.03-.28-.07-.32-.12-.35-.18-.36-.26-.36-.36-.35-.46-.32-.59-.28-.73-.21-.88-.14-1.05-.05-1.23.06-1.22.16-1.04.24-.87.32-.71.36-.57.4-.44.42-.33.42-.24.4-.16.36-.1.32-.05.24-.01h.16l.06.01h8.16v-.83H6.18l-.01-2.75-.02-.37.05-.34.11-.31.17-.28.25-.26.31-.23.38-.2.44-.18.51-.15.58-.12.64-.1.71-.06.77-.04.84-.02 1.27.05zm-6.3 1.98l-.23.33-.08.41.08.41.23.34.33.22.41.09.41-.09.33-.22.23-.34.08-.41-.08-.41-.23-.33-.33-.22-.41-.09-.41.09zm13.09 3.95l.28.06.32.12.35.18.36.27.36.35.35.47.32.59.28.73.21.88.14 1.04.05 1.23-.06 1.23-.16 1.04-.24.86-.32.71-.36.57-.4.45-.42.33-.42.24-.4.16-.36.09-.32.05-.24.02-.16-.01h-8.22v.82h5.84l.01 2.76.02.36-.05.34-.11.31-.17.29-.25.25-.31.24-.38.2-.44.17-.51.15-.58.13-.64.09-.71.07-.77.04-.84.01-1.27-.04-1.07-.14-.9-.2-.73-.25-.59-.3-.45-.33-.34-.34-.25-.34-.16-.33-.1-.3-.04-.25-.02-.2.01-.13v-5.34l.05-.64.13-.54.21-.46.26-.38.3-.32.33-.24.35-.2.35-.14.33-.1.3-.06.26-.04.21-.02.13-.01h5.84l.69-.05.59-.14.5-.21.41-.28.33-.32.27-.35.2-.36.15-.36.1-.35.07-.32.04-.28.02-.21V6.07h2.09l.14.01zm-6.47 14.25l-.23.33-.08.41.08.41.23.33.33.23.41.08.41-.08.33-.23.23-.33.08-.41-.08-.41-.23-.33-.33-.23-.41-.08-.41.08z"/></g></svg><span class="lk" style="letter-spacing:1.23px">sentry</span></div><div class="c3">Apr 1, 2025 9:50:17 PM UTC</div><div class="cn" style="right:817px">563.00ms</div><div class="cn" style="right:619px">616.00ms</div><div class="cn" style="right:422px">1.44s</div><div class="cn" style="right:226px">5.36s</div><div class="cn" style="right:31px">3.7k</div></div><div class="row" style="top:1450px"><div class="c1" style="letter-spacing:1.5px"><span class="lk">/api/0/organizations/{organization_id_or_slug}/tags/</span></div><div class="c2"><svg class="pi" width="32" height="32" viewBox="0 0 32 32"><rect width="32" height="32" rx="6" fill="#5c9fd5"/><g transform="translate(3,3) scale(1.0833)" fill="#fff"><path d="M14.25.18l.9.2.73.26.59.3.45.32.34.34.25.34.16.33.1.3.04.26.02.2-.01.13V8.5l-.05.63-.13.55-.21.46-.26.38-.3.31-.33.25-.35.19-.35.14-.33.1-.3.07-.26.04-.21.02H8.77l-.69.05-.59.14-.5.22-.41.27-.33.32-.27.35-.2.36-.15.37-.1.35-.07.32-.04.27-.02.21v3.06H3.17l-.21-.03-.28-.07-.32-.12-.35-.18-.36-.26-.36-.36-.35-.46-.32-.59-.28-.73-.21-.88-.14-1.05-.05-1.23.06-1.22.16-1.04.24-.87.32-.71.36-.57.4-.44.42-.33.42-.24.4-.16.36-.1.32-.05.24-.01h.16l.06.01h8.16v-.83H6.18l-.01-2.75-.02-.37.05-.34.11-.31.17-.28.25-.26.31-.23.38-.2.44-.18.51-.15.58-.12.64-.1.71-.06.77-.04.84-.02 1.27.05zm-6.3 1.98l-.23.33-.08.41.08.41.23.34.33.22.41.09.41-.09.33-.22.23-.34.08-.41-.08-.41-.23-.33-.33-.22-.41-.09-.41.09zm13.09 3.95l.28.06.32.12.35.18.36.27.36.35.35.47.32.59.28.73.21.88.14 1.04.05 1.23-.06 1.23-.16 1.04-.24.86-.32.71-.36.57-.4.45-.42.33-.42.24-.4.16-.36.09-.32.05-.24.02-.16-.01h-8.22v.82h5.84l.01 2.76.02.36-.05.34-.11.31-.17.29-.25.25-.31.24-.38.2-.44.17-.51.15-.58.13-.64.09-.71.07-.77.04-.84.01-1.27-.04-1.07-.14-.9-.2-.73-.25-.59-.3-.45-.33-.34-.34-.25-.34-.16-.33-.1-.3-.04-.25-.02-.2.01-.13v-5.34l.05-.64.13-.54.21-.46.26-.38.3-.32.33-.24.35-.2.35-.14.33-.1.3-.06.26-.04.21-.02.13-.01h5.84l.69-.05.59-.14.5-.21.41-.28.33-.32.27-.35.2-.36.15-.36.1-.35.07-.32.04-.28.02-.21V6.07h2.09l.14.01zm-6.47 14.25l-.23.33-.08.41.08.41.23.33.33.23.41.08.41-.08.33-.23.23-.33.08-.41-.08-.41-.23-.33-.33-.23-.41-.08-.41.08z"/></g></svg><span class="lk" style="letter-spacing:1.23px">sentry</span></div><div class="c3">Apr 1, 2025 9:50:17 PM UTC</div><div class="cn" style="right:817px">563.00ms</div><div class="cn" style="right:619px">616.00ms</div><div class="cn" style="right:422px">1.44s</div><div class="cn" style="right:226px">5.36s</div><div class="cn" style="right:31px">3.5k</div></div>
<div id="shade"></div>
</body></html>
